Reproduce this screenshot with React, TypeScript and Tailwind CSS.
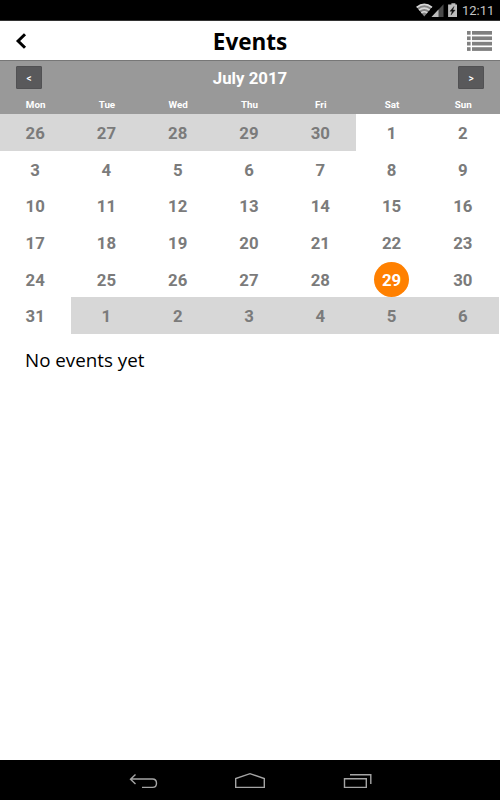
import React from 'react';

const weekDays = ['Mon', 'Tue', 'Wed', 'Thu', 'Fri', 'Sat', 'Sun'];

const LEADING = 5;
const DAYS_IN_MONTH = 31;
const TODAY = 29;

const days = Array.from({ length: 42 }, (_, i) => {
  if (i < LEADING) return { day: 26 + i, outside: true };
  const day = i - LEADING + 1;
  return day > DAYS_IN_MONTH
    ? { day: day - DAYS_IN_MONTH, outside: true }
    : { day, outside: false };
});

const StatusBar = () => (
  <div className="flex h-[21px] shrink-0 items-start justify-end border-b border-[#333] bg-black pr-[6px] text-[#c4c4c4]">
    <svg className="h-5 w-[46px]" viewBox="0 0 46 20" fill="none">
      {/* wifi */}
      <path d="M5.8 7.2Q13.3 .8 20.8 7.2L13.3 16.5z" fill="#858585" />
      <path d="M5.6 7.4Q13.3 1.2 21 7.4M8 10.2Q13.3 6 18.6 10.2M10.3 12.9Q13.3 10.6 16.3 12.9" stroke="#d8d8d8" strokeWidth="1.6" />
      {/* signal */}
      <path d="M32.5 4.2V17H20.5z" fill="#4a4a4a" />
      <path d="M27.5 9.5V17H20.5z" fill="#bdbdbd" />
      {/* battery */}
      <path d="M40.3 3.2h4v1.3H46V17h-9V4.5h3.3z" transform="translate(.1 0)" fill="#bdbdbd" />
      <path d="M43 6.5l-4 4.7h2.2l-1.2 3.9 4.1-5h-2.3z" stroke="#111" strokeWidth=".4" fill="#111" />
    </svg>
    <span className="ml-[5px] w-[32px] pt-[1px] font-['Roboto',sans-serif] text-[13px] leading-[20px] whitespace-nowrap">12:11</span>
  </div>
);

const Header = () => (
  <header className="grid h-10 shrink-0 grid-cols-[1fr_auto_1fr] items-center border-b border-[#777] bg-white">
    <svg className="ml-[15px] mt-[1px] h-[18px] w-3" viewBox="0 0 12 18" fill="none">
      <path d="M10 2.2L3.1 9l6.9 6.8" stroke="#000" strokeWidth="3" />
    </svg>
    <h1 className="pt-[2px] text-[22.5px] leading-[37px] font-bold text-black">Events</h1>
    <svg className="mt-[1px] mr-[8px] h-5 w-[25px] justify-self-end" viewBox="0 0 25 20" fill="#808080">
      {[0, 5.4, 10.8, 16.2].map((y) => (
        <g key={y}>
          <rect x="0" y={y} width="3.6" height="3.7" />
          <rect x="5" y={y} width="20" height="3.7" />
        </g>
      ))}
    </svg>
  </header>
);

const NavButton = ({ label }: { label: string }) => (
  <button className="h-[23px] w-[26px] rounded-[1px] border border-[#515153] bg-[#59595b] pt-[1px] text-[10px] leading-[21px] font-medium text-white">
    {label}
  </button>
);

const Calendar = () => (
  <section className="font-['Roboto',sans-serif]">
    <div className="h-[53px] bg-[#999]">
      <div className="flex items-center justify-between px-4 pt-[5px]">
        <NavButton label="<" />
        <h2 className="pt-[2px] text-[16.8px] leading-[21px] font-bold text-white">July 2017</h2>
        <NavButton label=">" />
      </div>
      <div className="grid w-[499px] grid-cols-7 pt-[8px] text-center text-[9.8px] leading-[16px] font-bold text-white">
        {weekDays.map((name) => (
          <span key={name}>{name}</span>
        ))}
      </div>
    </div>
    <div className="grid h-[220px] w-[499px] grid-cols-7 grid-rows-6 text-[16.8px] font-bold text-[#7b7b7b]">
      {days.map(({ day, outside }, i) => (
        <div key={i} className={`flex items-center justify-center pt-[2.5px] pr-px ${outside ? 'bg-[#d7d7d7]' : ''}`}>
          {!outside && day === TODAY ? (
            <span className="-mt-[1.5px] flex h-[35px] w-[35px] items-center justify-center rounded-full bg-[#ff8000] pt-[2px] text-white">
              {day}
            </span>
          ) : (
            day
          )}
        </div>
      ))}
    </div>
  </section>
);

const NavigationBar = () => (
  <nav className="flex h-10 shrink-0 items-center justify-center bg-black">
    <svg className="h-10 w-[250px]" viewBox="125 0 250 40" fill="none" stroke="#a5a5a5" strokeWidth="1.4">
      <path d="M135.5 14.5l-5 4.8 5 4.8M131 19h21.5q4 0 4 4.2t-4 4.2H142" />
      <path d="M235.7 27.4V18.5L250 13.7l14.3 4.8v8.9z" />
      <path d="M344.5 18.7h21.8v8.7h-21.8zM350 14.8h20.8V24" />
    </svg>
  </nav>
);

const App = () => {
  return (
    <div className="flex h-[800px] w-[500px] flex-col overflow-hidden bg-white font-['Open_Sans',sans-serif]">
      <StatusBar />
      <Header />
      <main className="flex-1">
        <Calendar />
        <p className="pt-[13px] pl-[25px] text-[18.8px] leading-[26px] text-black">No events yet</p>
      </main>
      <NavigationBar />
    </div>
  );
};

export default App;
